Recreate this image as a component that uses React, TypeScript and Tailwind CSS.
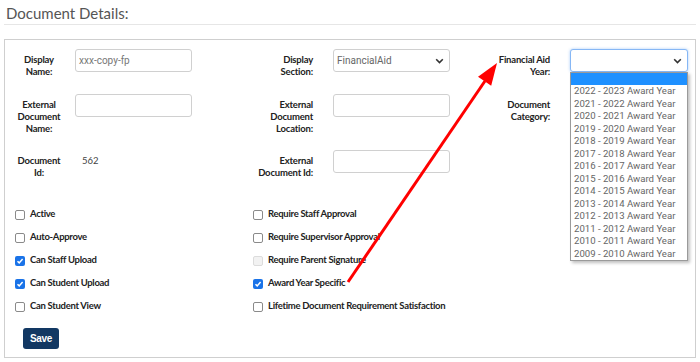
import React from 'react';

const years = [
  '2022 - 2023 Award Year',
  '2021 - 2022 Award Year',
  '2020 - 2021 Award Year',
  '2019 - 2020 Award Year',
  '2018 - 2019 Award Year',
  '2017 - 2018 Award Year',
  '2016 - 2017 Award Year',
  '2015 - 2016 Award Year',
  '2014 - 2015 Award Year',
  '2013 - 2014 Award Year',
  '2012 - 2013 Award Year',
  '2011 - 2012 Award Year',
  '2010 - 2011 Award Year',
  '2009 - 2010 Award Year',
];

const checks: [string, boolean, string, boolean, boolean][] = [
  ['Active', false, 'Require Staff Approval', false, false],
  ['Auto-Approve', false, 'Require Supervisor Approval', false, false],
  ['Can Staff Upload', true, 'Require Parent Signature', false, true],
  ['Can Student Upload', true, 'Award Year Specific', true, false],
  ['Can Student View', false, 'Lifetime Document Requirement Satisfaction', false, false],
];

function Chevron() {
  return (
    <svg width="9" height="6" viewBox="0 0 9 6" className="shrink-0">
      <path d="M1.2 1.2 4.5 4.5 7.8 1.2" fill="none" stroke="#333" strokeWidth="1.6" />
    </svg>
  );
}

function Box({ checked, disabled }: { checked: boolean; disabled?: boolean }) {
  if (checked) {
    return (
      <span className="flex h-[10px] w-[10px] shrink-0 items-center justify-center rounded-[2px] bg-[#1a73e8]">
        <svg width="8" height="8" viewBox="0 0 8 8">
          <path d="M1.5 4.2 3.2 5.9 6.6 2.1" fill="none" stroke="#fff" strokeWidth="1.5" />
        </svg>
      </span>
    );
  }
  return (
    <span
      className={`h-[10px] w-[10px] shrink-0 rounded-[2px] border ${
        disabled ? 'border-[#dcdcdc] bg-[#f2f2f2]' : 'border-[#8a8a8a] bg-white'
      }`}
    />
  );
}

const label = 'pt-[5px] text-[9.5px] font-bold leading-[12px] tracking-[-0.2px] text-[#222]';
const input = 'h-[23px] rounded-[3px] border border-[#d0d0d0] bg-white';

export default function App() {
  return (
    <div className="relative h-[362px] w-[700px] overflow-hidden bg-white font-['Lato',sans-serif]">
      {/* Header */}
      <div className="mx-[4px] h-[25px] border-b border-[#e6e6e6] pl-[2px] font-['Lato',sans-serif] text-[15px] leading-[26px] text-[#555]">
        Document Details:
      </div>

      {/* Panel */}
      <div className="mx-[4px] mt-[14px] border border-[#cfcfcf] pb-[8px] pt-[9px]">
        {/* Row 1 */}
        <div className="flex items-start">
          <div className={`${label} ml-[12px] w-[44px] text-center`}>Display Name:</div>
          <div className={`${input} ml-[14px] w-[117px] px-[3px] font-['Roboto',sans-serif] text-[10px] leading-[21px] text-[#777]`}>
            xxx-copy-fp
          </div>
          <div className={`${label} ml-[65px] w-[56px] text-right`}>Display Section:</div>
          <div className={`${input} ml-[20px] flex w-[117px] items-center justify-between pl-[3px] pr-[5px] font-['Roboto',sans-serif] text-[10px] text-[#666]`}>
            <span>FinancialAid</span>
            <Chevron />
          </div>
          <div className={`${label} ml-[44px] w-[56px] text-right`}>Financial Aid Year:</div>
          <div className="relative ml-[20px] w-[118px]">
            <div className="flex h-[23px] items-center justify-end rounded-[3px] border border-[#86b7f5] bg-white pr-[5px] shadow-[0_0_3px_rgba(60,140,240,0.45)]">
              <Chevron />
            </div>
            <div className="absolute left-0 top-[23px] z-10 w-[118px] border border-[#9a9a9a] bg-white shadow-[2px_2px_3px_rgba(0,0,0,0.25)]">
              <div className="h-[12px] bg-[#1e90ff]" />
              {years.map((y) => (
                <div key={y} className="h-[12.5px] pl-[3px] font-['Roboto',sans-serif] text-[9.6px] leading-[12.5px] text-[#666]">
                  {y}
                </div>
              ))}
            </div>
          </div>
        </div>

        {/* Row 2 */}
        <div className="mt-[16px] flex items-start">
          <div className={`${label} ml-[12px] w-[44px] text-center`}>External Document Name:</div>
          <div className={`${input} ml-[14px] w-[117px]`} />
          <div className={`${label} ml-[65px] w-[56px] text-right`}>External Document Location:</div>
          <div className={`${input} ml-[20px] w-[117px]`} />
          <div className={`${label} ml-[44px] w-[56px] text-right`}>Document Category:</div>
        </div>

        {/* Row 3 */}
        <div className="mt-[15px] flex items-start">
          <div className={`${label} ml-[12px] w-[44px] text-center`}>Document Id:</div>
          <div className="ml-[14px] w-[117px] pl-[7px] pt-[5px] text-[9.5px] leading-[12px] text-[#444]">562</div>
          <div className={`${label} ml-[65px] w-[56px] text-right`}>External Document Id:</div>
          <div className={`${input} ml-[20px] w-[117px]`} />
        </div>

        {/* Checkboxes */}
        <div className="mt-[24px] grid grid-cols-[238px_1fr] pl-[10px]">
          {checks.map(([l, lc, r, rc, rd]) => (
            <React.Fragment key={l}>
              <div className="flex h-[23px] items-center gap-[5px] text-[9.5px] font-bold tracking-[-0.3px] text-[#222]">
                <Box checked={lc} />
                <span>{l}</span>
              </div>
              <div className="flex h-[23px] items-center gap-[5px] text-[9.5px] font-bold tracking-[-0.3px] text-[#222]">
                <Box checked={rc} disabled={rd} />
                <span>{r}</span>
              </div>
            </React.Fragment>
          ))}
        </div>

        <button className="ml-[18px] mt-[10px] h-[21px] w-[36px] rounded-[3px] bg-[#123863] font-['Liberation_Sans',sans-serif] text-[10px] font-bold tracking-[-0.3px] text-white">
          Save
        </button>
      </div>

      {/* Annotation arrow */}
      <svg className="pointer-events-none absolute inset-0 z-20" width="700" height="362">
        <line x1="348" y1="282" x2="485" y2="81" stroke="#ff0000" strokeWidth="3" />
        <polygon points="497,63 491.2,85.7 478,76.7" fill="#ff0000" />
      </svg>
    </div>
  );
}
